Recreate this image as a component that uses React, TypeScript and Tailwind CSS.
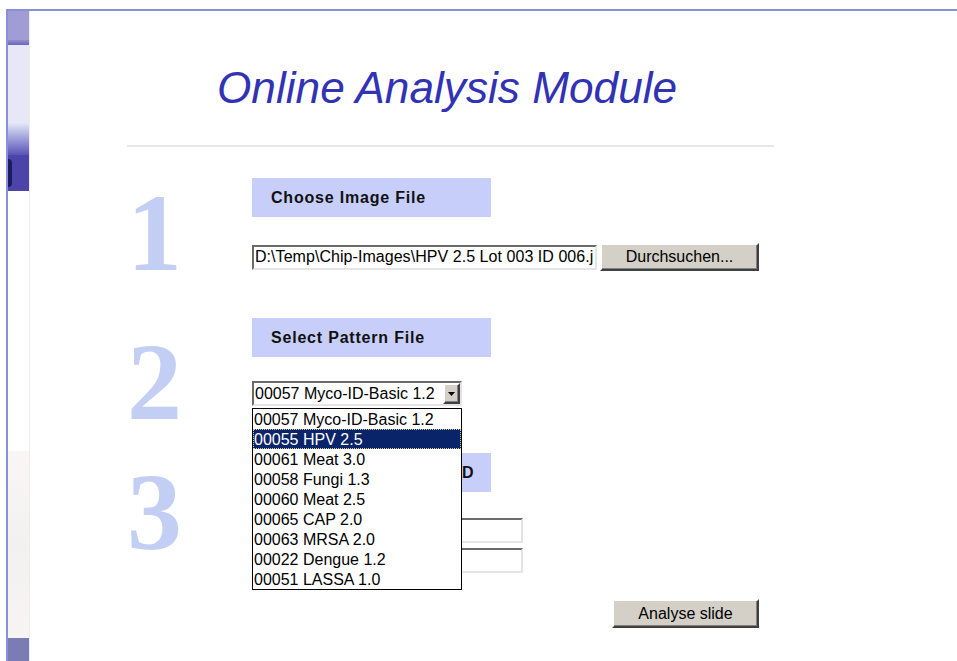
import { useState } from "react";

const PATTERNS = [
  "00057 Myco-ID-Basic 1.2",
  "00055 HPV 2.5",
  "00061 Meat 3.0",
  "00058 Fungi 1.3",
  "00060 Meat 2.5",
  "00065 CAP 2.0",
  "00063 MRSA 2.0",
  "00022 Dengue 1.2",
  "00051 LASSA 1.0",
];

const SANS = "font-['Liberation_Sans',Arial,Helvetica,sans-serif]";

// classic sunken text field border
const SUNKEN =
  "border-2 border-t-[#6a6a6a] border-l-[#6a6a6a] border-b-[#e4e4e4] border-r-[#e4e4e4] bg-white";
// classic raised button border
const RAISED =
  "border-2 border-t-white border-l-white border-b-[#404040] border-r-[#404040] bg-[#d4d0c8] shadow-[inset_-1px_-1px_0_#808080]";

// the big step digit hangs in the left column without adding to the row height
function StepNumber({ n, offset }: { n: string; offset: string }) {
  return (
    <div className="h-0 w-[125px] shrink-0 self-start">
      <div
        className={`font-['Liberation_Serif','Times_New_Roman',serif] text-[110px] font-bold leading-none text-[#c3cef5] ${offset}`}>
        {n}
      </div>
    </div>
  );
}

function StepHeader({ title }: { title: string }) {
  return (
    <div className="flex h-[39px] w-[239px] items-center bg-[#c6cef9] pl-[19px]">
      <span className="whitespace-nowrap text-[16px] font-bold tracking-[0.8px] text-[#111]">
        {title}
      </span>
    </div>
  );
}

function SideStrip() {
  return (
    <aside className="flex w-[22px] shrink-0 flex-col border-r border-[#ececec]">
      <div className="h-[29px] bg-[#a29cd4]" />
      <div className="h-[5px] bg-gradient-to-b from-[#958dcc] to-[#6c62bf]" />
      <div className="h-[78px] bg-[#e7e7f7]" />
      <div className="h-[32px] bg-gradient-to-b from-[#e7e7f7] to-[#5b52b5]" />
      <div className="flex h-[36px] bg-[#4d44ab]">
        <div className="my-[4px] w-[4px] rounded-r-full bg-[#1d1a5e]" />
      </div>
      <div className="h-[260px] bg-white" />
      <div className="h-[187px] bg-gradient-to-b from-[#f9f6f5] via-[#f3f0f0] to-[#f7f4f3]" />
      <div className="flex-1 bg-[#7b7bb6]" />
    </aside>
  );
}

function PatternSelect() {
  const [selected] = useState(0);
  const [hover, setHover] = useState(1);

  return (
    <div className="relative w-[210px]">
      <div className={`flex h-[25px] items-center ${SUNKEN}`}>
        <span className="flex-1 whitespace-nowrap pl-[1px] text-[16px] leading-none text-black">
          {PATTERNS[selected]}
        </span>
        <div className={`flex h-[21px] w-[17px] items-center justify-center ${RAISED}`}>
          <svg width="7" height="4" viewBox="0 0 7 4">
            <polygon points="0,0 7,0 3.5,4" fill="#000" />
          </svg>
        </div>
      </div>
      <ul className="absolute left-0 top-[27px] z-10 w-[210px] border border-black bg-white">
        {PATTERNS.map((p, i) => (
          <li
            key={p}
            onMouseEnter={() => setHover(i)}
            className={
              i === hover
                ? "h-[20px] whitespace-nowrap bg-[#0a246a] pl-[1px] text-[16px] leading-[21px] text-white outline-1 outline-offset-[-1px] outline-dotted outline-[#d8cf9a]"
                : "h-[20px] whitespace-nowrap pl-[1px] text-[16px] leading-[21px] text-black"
            }>
            {p}
          </li>
        ))}
      </ul>
    </div>
  );
}

export default function App() {
  return (
    <div className={`min-h-[661px] bg-white pl-[6px] pt-[9px] ${SANS}`}>
      <div className="flex h-[652px] border-l-2 border-t-2 border-[#8790da]">
        <SideStrip />

        <main className="flex-1">
          <h1 className="ml-[187px] mt-[55px] text-[44.2px] font-normal italic leading-[44px] text-[#3232b4]">
            Online Analysis Module
          </h1>
          <div className="ml-[97px] mt-[35px] h-[2px] w-[647px] bg-[#e6e6e6]" />

          <div className="ml-[97px] mt-[31px] flex flex-col">
            {/* step 1 */}
            <section className="flex">
              <StepNumber n="1" offset="mt-0" />
              <div className="flex flex-col">
                <StepHeader title="Choose Image File" />
                <div className="mt-[26px] flex items-center gap-[3px]">
                  <input
                    readOnly
                    value="D:\Temp\Chip-Images\HPV 2.5 Lot 003 ID 006.jpg"
                    className={`h-[25px] w-[345px] px-[1px] text-[16px] tracking-[0.05px] text-black outline-none ${SUNKEN}`}
                  />
                  <button className={`h-[28px] w-[159px] text-[16px] text-black ${RAISED}`}>
                    Durchsuchen...
                  </button>
                </div>
              </div>
            </section>

            {/* step 2 */}
            <section className="mt-[47px] flex">
              <StepNumber n="2" offset="mt-[9px]" />
              <div className="flex flex-col">
                <StepHeader title="Select Pattern File" />
                <div className="mt-[24px]">
                  <PatternSelect />
                </div>
              </div>
            </section>

            {/* step 3 */}
            <section className="mt-[47px] flex">
              <StepNumber n="3" offset="mt-[4px]" />
              <div className="flex w-[507px] flex-col">
                <StepHeader title="Enter Lot and Sample ID" />
                <div className="mt-[26px] flex flex-col gap-[5px]">
                  <input className={`h-[25px] w-[271px] px-[1px] text-[16px] outline-none ${SUNKEN}`} />
                  <input className={`h-[25px] w-[271px] px-[1px] text-[16px] outline-none ${SUNKEN}`} />
                </div>
                <div className="mt-[26px] flex justify-end">
                  <button className={`h-[29px] w-[147px] text-[16px] text-black ${RAISED}`}>
                    Analyse slide
                  </button>
                </div>
              </div>
            </section>
          </div>
        </main>
      </div>
    </div>
  );
}
